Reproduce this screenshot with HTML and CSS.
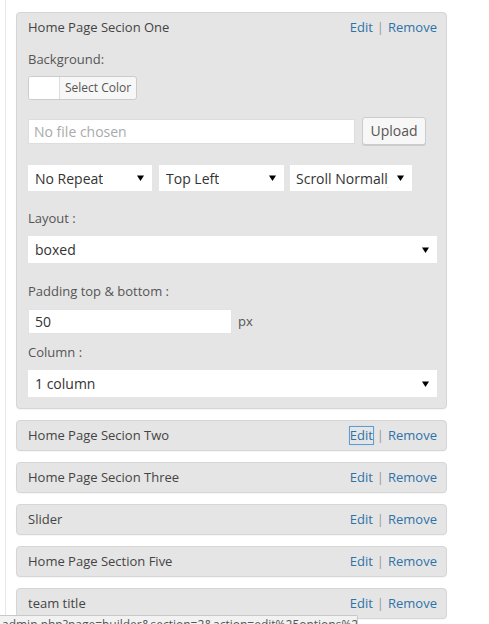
FILE: index.html
```html
<!DOCTYPE html>
<html>
<head>
<meta charset="utf-8">
<link rel="stylesheet" href="styles.css">
</head>
<body>
<div class="page">
  <div class="sections">
    <div class="panel open">
      <div class="head">
        <span class="title">Home Page Secion One</span>
        <span class="actions"><a class="lnk">Edit</a><span class="sep">|</span><a class="lnk">Remove</a></span>
      </div>
      <div class="body">
        <div class="label first">Background:</div>
        <div class="colorbtn"><span class="swatch"></span><span class="ctext">Select Color</span></div>
        <div class="filerow">
          <div class="fileinput">No file chosen</div>
          <div class="btn">Upload</div>
        </div>
        <div class="selrow">
          <div class="sel w124"><span class="stext">No Repeat</span><svg class="arr" width="7" height="6" viewBox="0 0 7 6"><path d="M0 0.5H7L3.5 6Z"/></svg></div>
          <div class="sel w125"><span class="stext">Top Left</span><svg class="arr" width="7" height="6" viewBox="0 0 7 6"><path d="M0 0.5H7L3.5 6Z"/></svg></div>
          <div class="sel w122"><span class="stext clip">Scroll Normally</span><svg class="arr" width="7" height="6" viewBox="0 0 7 6"><path d="M0 0.5H7L3.5 6Z"/></svg></div>
        </div>
        <div class="label gap">Layout :</div>
        <div class="sel full"><span class="stext">boxed</span><svg class="arr" width="7" height="6" viewBox="0 0 7 6"><path d="M0 0.5H7L3.5 6Z"/></svg></div>
        <div class="label gap2">Padding top &amp; bottom :</div>
        <div class="pxrow"><div class="numinput">50</div><span class="unit">px</span></div>
        <div class="label">Column :</div>
        <div class="sel full"><span class="stext">1 column</span><svg class="arr" width="7" height="6" viewBox="0 0 7 6"><path d="M0 0.5H7L3.5 6Z"/></svg></div>
      </div>
    </div>
    <div class="panel">
      <div class="head">
        <span class="title">Home Page Secion Two</span>
        <span class="actions"><a class="lnk focus">Edit</a><span class="sep">|</span><a class="lnk">Remove</a></span>
      </div>
    </div>
    <div class="panel">
      <div class="head">
        <span class="title">Home Page Secion Three</span>
        <span class="actions"><a class="lnk">Edit</a><span class="sep">|</span><a class="lnk">Remove</a></span>
      </div>
    </div>
    <div class="panel">
      <div class="head">
        <span class="title">Slider</span>
        <span class="actions"><a class="lnk">Edit</a><span class="sep">|</span><a class="lnk">Remove</a></span>
      </div>
    </div>
    <div class="panel">
      <div class="head">
        <span class="title">Home Page Section Five</span>
        <span class="actions"><a class="lnk">Edit</a><span class="sep">|</span><a class="lnk">Remove</a></span>
      </div>
    </div>
    <div class="panel">
      <div class="head">
        <span class="title">team title</span>
        <span class="actions"><a class="lnk">Edit</a><span class="sep">|</span><a class="lnk">Remove</a></span>
      </div>
    </div>
  </div>
</div>
<div class="status"><span class="stxt">admin.php?page=builder&amp;section=2&amp;action=edit%25options%25panel%25tab%25id=%25ltit</span></div>
</body>
</html>
```

FILE: styles.css
```css
html, body {
  margin: 0;
  padding: 0;
  background: #fff;
  font-family: "Open Sans", "Liberation Sans", sans-serif;
  overflow: hidden;
}
.page {
  margin-left: 5px;
  border-left: 1px solid #e8e8e8;
  min-height: 624px;
  padding: 12px 0 0 10px;
  box-sizing: border-box;
}
.sections {
  width: 431px;
  display: flex;
  flex-direction: column;
  gap: 11px;
}
.panel {
  background: #e5e5e5;
  border: 1px solid #d6d6d6;
  border-radius: 4px;
  box-shadow: 0 1px 1px rgba(0,0,0,0.04);
}
.head {
  display: flex;
  justify-content: space-between;
  align-items: center;
  height: 29px;
  padding: 0 9px 0 11px;
  font-size: 13px;
  line-height: 17px;
}
.title { color: #444; }
.actions { display: flex; align-items: center; }
.lnk { color: #2f72a8; cursor: pointer; }
.lnk.focus { outline: 1px solid #5b9dd9; outline-offset: 0; box-shadow: 0 0 2px rgba(30,140,190,.6); }
.sep { color: #999; margin: 0 4px 0 4px; }
.body {
  padding: 0 9px 11px 11px;
}
.label {
  font-size: 13px;
  line-height: 18px;
  color: #555;
  margin-top: 9px;
}
.label.first { margin-top: 8px; }
.label.gap { margin-top: 18px; }
.label.gap2 { margin-top: 19px; }
.colorbtn {
  margin-top: 8px;
  display: flex;
  width: 109px;
  height: 24px;
  box-sizing: border-box;
  border: 1px solid #ccc;
  border-radius: 3px;
  overflow: hidden;
  background: #f7f7f7;
}
.swatch {
  width: 30px;
  background: #fff;
  border-right: 1px solid #ddd;
}
.ctext {
  font-size: 12px;
  line-height: 22px;
  color: #555;
  padding-left: 5px;
}
.filerow {
  margin-top: 17px;
  display: flex;
  align-items: center;
  gap: 7px;
}
.fileinput {
  width: 327px;
  height: 25px;
  box-sizing: border-box;
  background: #fff;
  border: 1px solid #ddd;
  font-size: 14px;
  line-height: 23px;
  color: #aaa;
  padding-left: 5px;
}
.btn {
  width: 64px;
  height: 28px;
  box-sizing: border-box;
  border: 1px solid #ccc;
  border-radius: 3px;
  background: #f7f7f7;
  box-shadow: 0 1px 0 #ccc;
  font-size: 14px;
  line-height: 26px;
  text-align: center;
  color: #555;
}
.selrow {
  margin-top: 20px;
  display: flex;
  gap: 7px;
}
.sel {
  height: 26px;
  box-sizing: border-box;
  background: #fff;
  display: flex;
  align-items: center;
  justify-content: space-between;
  padding: 0 8px 0 7px;
  font-size: 14px;
  color: #333;
}
.w124 { width: 124px; }
.w125 { width: 125px; margin-right: -1px; }
.w122 { width: 122px; padding-left: 6px; }
.sel.full { width: 409px; height: 27px; margin-top: 9px; }
.stext { white-space: nowrap; overflow: hidden; }
.stext.clip { width: 92px; }
.arr { fill: #000; flex: none; }
.pxrow {
  margin-top: 9px;
  display: flex;
  align-items: center;
  gap: 5px;
}
.numinput {
  width: 204px;
  height: 25px;
  box-sizing: border-box;
  background: #fff;
  border: 1px solid #e3e3e3;
  font-size: 14px;
  line-height: 23px;
  color: #333;
  padding-left: 6px;
}
.unit {
  font-size: 13px;
  color: #555;
  line-height: 25px;
  padding-left: 1px;
}
.status {
  position: fixed;
  left: 0;
  bottom: 0;
  width: 357px;
  height: 8px;
  background: #f2f2f2;
  border-top: 1px solid #c8c8c8;
  border-right: 1px solid #c8c8c8;
  border-top-right-radius: 2px;
  overflow: hidden;
}
.stxt {
  display: block;
  font-size: 12px;
  line-height: 16px;
  color: #555;
  white-space: nowrap;
  padding-left: 2px;
  margin-top: 1px;
}
```
